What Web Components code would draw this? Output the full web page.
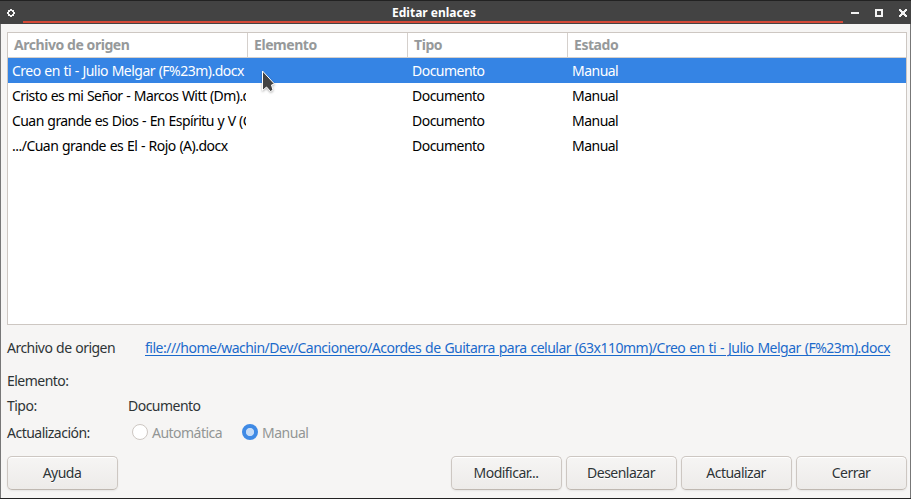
<!DOCTYPE html>
<html lang="es">
<head>
<meta charset="utf-8">
<title>Editar enlaces</title>
<style>
html,body{margin:0;height:100%;overflow:hidden}
body{font-family:"Noto Sans",sans-serif;font-size:14px;letter-spacing:-.52px;word-spacing:.55px;color:#2e3436;background:#f6f5f4}
</style>
</head>
<body>
<links-dialog></links-dialog>
<script>
const define = (name, html) => customElements.define(name, class extends HTMLElement {
  constructor() {
    super();
    this.attachShadow({mode: "open"}).innerHTML = html;
  }
});

define("title-bar", `<style>
:host{display:grid;grid-template-columns:23px 1fr 68px;height:24px;box-sizing:border-box;background:#434343;border-top:1px solid #222;color:#fff;font-weight:700;font-size:12px;letter-spacing:0;word-spacing:0}
.name{border-bottom:2px solid #d64937;margin-bottom:1px;display:flex;align-items:center;justify-content:center;line-height:18px}
.name span{position:relative;top:2px;left:1px}
svg{display:block;shape-rendering:crispEdges}
</style>
<svg width="23" height="23"><path fill="#f2f2f2" fill-rule="evenodd" d="M10 8h2v1h2v2h1v2h-1v2h-2v1h-2v-1h-2v-2h-1v-2h1v-2h2zM10 10v1h-1v2h1v1h2v-1h1v-2h-1v-1z"/></svg>
<div class="name"><span><slot></slot></span></div>
<svg width="68" height="23"><g fill="#f2f2f2"><path d="M8 11h8v2h-8z"/><path fill-rule="evenodd" d="M32 8h8v8h-8zM34 10v4h4v-4z"/><path d="M56 8h2v1h1v1h2v-1h1v-1h2v2h-1v1h-1v2h1v1h1v2h-2v-1h-1v-1h-2v1h-1v1h-2v-2h1v-1h1v-2h-1v-1h-1z"/></g></svg>`);

define("link-row", `<style>
:host{display:grid;grid-template-columns:240px 160px 160px 1fr;height:25px;line-height:25px;color:#000}
:host([selected]){background:#3584e4;color:#fff}
span{padding-left:4px;margin-right:2px;overflow:hidden;white-space:nowrap}
</style><span><slot name="file"></slot></span><span></span><span>Documento</span><span>Manual</span>`);

define("link-table", `<style>
:host{display:flex;flex-direction:column;height:293px;box-sizing:border-box;border:1px solid #cdc7c2;background:#fff}
header{display:grid;grid-template-columns:240px 160px 160px 1fr;height:24px;line-height:24px;border-bottom:1px solid #d5d0cc;font-weight:700;color:#96999a;letter-spacing:-.44px;word-spacing:0}
header span{padding-left:6px;border-right:1px solid #d5d0cc;box-sizing:border-box}
header span:last-child{border:0}
</style><header><span>Archivo de origen</span><span>Elemento</span><span>Tipo</span><span>Estado</span></header><slot></slot>`);

define("push-button", `<style>
:host{display:flex;align-items:center;justify-content:center;width:111px;height:34px;box-sizing:border-box;padding-right:1px;border:1px solid #cdc7c2;border-bottom-color:#bfb8b1;border-radius:5px;background:linear-gradient(#f6f5f4,#edebe9);box-shadow:inset 0 1px #fff,0 1px 2px rgba(0,0,0,.07);text-shadow:0 1px #fff;line-height:18px}
</style><slot></slot>`);

define("radio-choice", `<style>
:host{display:flex;align-items:center;gap:4px;color:#929595}
i{width:16px;height:16px;box-sizing:border-box;border:1px solid #cdc7c2;border-radius:50%;background:#fff;position:relative;top:-1px}
:host([checked]) i{border:0;background:radial-gradient(circle,#c6dcf7 3.7px,#3f8ae5 4.5px)}
</style><i></i><span><slot></slot></span>`);

define("field-row", `<style>
:host{display:grid;grid-template-columns:121px 1fr;height:25px;line-height:25px;white-space:nowrap}
div{display:flex}
</style><span><slot name="label"></slot></span><div><slot></slot></div>`);

define("links-dialog", `<style>
:host{display:flex;flex-direction:column;width:911px;height:499px;box-sizing:border-box;background:#f6f5f4;border-bottom:1px solid #222}
.body{flex:1;padding:8px 3px 8px 6px;border:solid #777;border-width:0 1px;display:flex;flex-direction:column}
.fields{margin-top:10px}
.tight{letter-spacing:-.57px}
.url{color:#1b6acb;text-decoration:underline;text-underline-offset:2px;text-decoration-thickness:1px;margin-left:17px;letter-spacing:-.5px;word-spacing:.7px}
.source{margin-bottom:8px}
.update{margin-top:2px}
radio-choice:first-of-type{margin-left:4px;margin-right:20px}
footer{display:flex;gap:4px;margin-top:auto}
footer push-button:first-child{margin-right:auto}
.pointer{position:absolute;left:260px;top:68px;filter:drop-shadow(0 1px 1px rgba(0,0,0,.3))}
</style>
<title-bar>Editar enlaces</title-bar>
<div class="body">
<link-table>
<link-row selected><span slot="file">Creo en ti - Julio Melgar (F%23m).docx</span></link-row>
<link-row><span slot="file" class="tight">Cristo es mi Señor - Marcos Witt (Dm).docx</span></link-row>
<link-row><span slot="file" class="tight">Cuan grande es Dios - En Espíritu y V (C).docx</span></link-row>
<link-row><span slot="file">.../Cuan grande es El - Rojo (A).docx</span></link-row>
</link-table>
<div class="fields">
<field-row class="source"><span slot="label">Archivo de origen</span><span class="url">file:///home/wachin/Dev/Cancionero/Acordes de Guitarra para celular (63x110mm)/Creo en ti - Julio Melgar (F%23m).docx</span></field-row>
<field-row><span slot="label">Elemento:</span></field-row>
<field-row><span slot="label">Tipo:</span><span>Documento</span></field-row>
<field-row class="update"><span slot="label">Actualización:</span><radio-choice>Automática</radio-choice><radio-choice checked>Manual</radio-choice></field-row>
</div>
<footer><push-button>Ayuda</push-button><push-button>Modificar...</push-button><push-button>Desenlazar</push-button><push-button>Actualizar</push-button><push-button>Cerrar</push-button></footer>
</div>
<svg class="pointer" width="18" height="26"><path d="M2.500 3v19.500l4-3.500 4 4.500 2.500-1.500-1.500-5 3-1z" fill="#434343" stroke="#fff"/></svg>`);
</script>
</body>
</html>
